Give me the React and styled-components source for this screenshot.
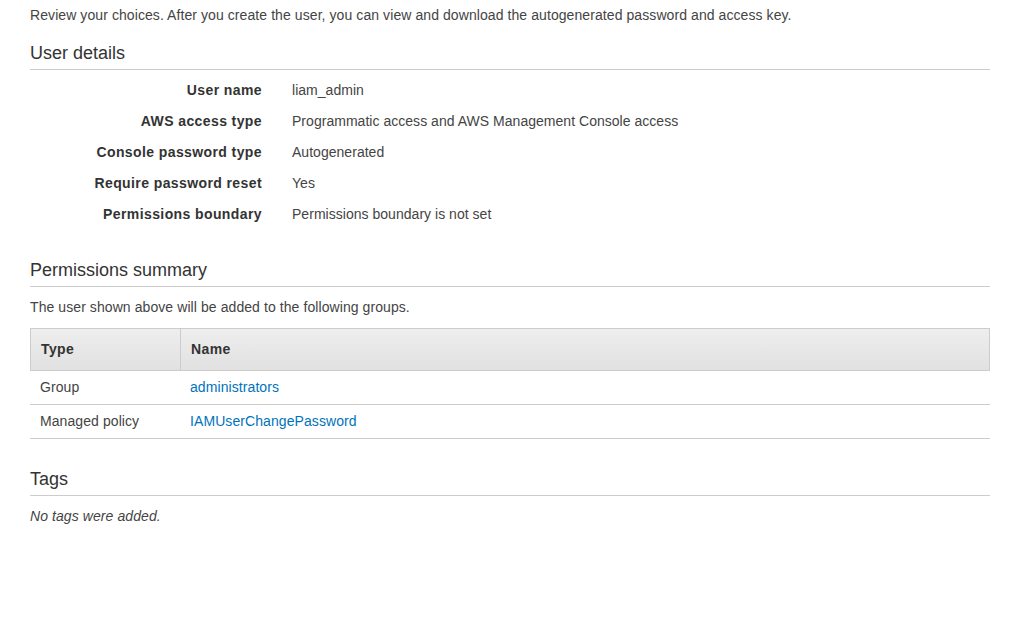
import React from "react";
import styled, { createGlobalStyle } from "styled-components";

const GlobalStyle = createGlobalStyle`
  body {
    margin: 0;
    background: #fff;
    font-family: "Liberation Sans", Arial, sans-serif;
    color: #444;
  }
`;

const Page = styled.div`
  width: 960px;
  padding: 5px 41px 40px 30px;
  font-size: 14px;
  letter-spacing: 0.08px;
`;

const Intro = styled.p`
  margin: 0;
  line-height: 20px;
`;

const SectionTitle = styled.h2`
  margin: ${(p) => p.$gap || 17}px 0 0;
  padding-bottom: 5px;
  font-size: 18px;
  font-weight: normal;
  line-height: 22px;
  letter-spacing: 0;
  color: #333;
  border-bottom: 1px solid #ccc;
`;

const DetailList = styled.dl`
  margin: 5px 0 0;
  display: grid;
  grid-template-columns: 232px 1fr;
  column-gap: 30px;
`;

const DetailLabel = styled.dt`
  text-align: right;
  font-weight: bold;
  line-height: 31px;
  letter-spacing: 0.4px;
  color: #333;
`;

const DetailValue = styled.dd`
  margin: 0;
  line-height: 31px;
  letter-spacing: 0.03px;
`;

const Note = styled.p`
  margin: 10px 0 0;
  line-height: 20px;
  font-style: ${(p) => (p.$italic ? "italic" : "normal")};
`;

const Table = styled.table`
  margin-top: 11px;
  width: 100%;
  border-collapse: separate;
  border-spacing: 0;
`;

const HeadCell = styled.th`
  padding: 0 10px;
  line-height: 41px;
  text-align: left;
  font-weight: bold;
  letter-spacing: 0.4px;
  color: #333;
  width: ${(p) => p.$width || "auto"};
  background: linear-gradient(#eee, #e1e1e1);
  border-top: 1px solid #ccc;
  border-bottom: 1px solid #ccc;
  border-left: 1px solid #ccc;

  &:last-child {
    border-right: 1px solid #ccc;
  }
`;

const Cell = styled.td`
  padding: 0 10px;
  line-height: 33px;
  border-bottom: 1px solid #ccc;
`;

const Link = styled.a`
  color: #0073bb;
  text-decoration: none;
`;

const details = [
  ["User name", "liam_admin"],
  ["AWS access type", "Programmatic access and AWS Management Console access"],
  ["Console password type", "Autogenerated"],
  ["Require password reset", "Yes"],
  ["Permissions boundary", "Permissions boundary is not set"],
];

const permissions = [
  ["Group", "administrators"],
  ["Managed policy", "IAMUserChangePassword"],
];

export default function App() {
  return (
    <>
      <GlobalStyle />
      <Page>
        <Intro>
          Review your choices. After you create the user, you can view and download the
          autogenerated password and access key.
        </Intro>

        <SectionTitle>User details</SectionTitle>
        <DetailList>
          {details.map(([label, value]) => (
            <React.Fragment key={label}>
              <DetailLabel>{label}</DetailLabel>
              <DetailValue>{value}</DetailValue>
            </React.Fragment>
          ))}
        </DetailList>

        <SectionTitle $gap={29}>Permissions summary</SectionTitle>
        <Note>The user shown above will be added to the following groups.</Note>
        <Table>
          <thead>
            <tr>
              <HeadCell $width="129px">Type</HeadCell>
              <HeadCell>Name</HeadCell>
            </tr>
          </thead>
          <tbody>
            {permissions.map(([type, name]) => (
              <tr key={name}>
                <Cell>{type}</Cell>
                <Cell>
                  <Link href="#">{name}</Link>
                </Cell>
              </tr>
            ))}
          </tbody>
        </Table>

        <SectionTitle $gap={29}>Tags</SectionTitle>
        <Note $italic>No tags were added.</Note>
      </Page>
    </>
  );
}
